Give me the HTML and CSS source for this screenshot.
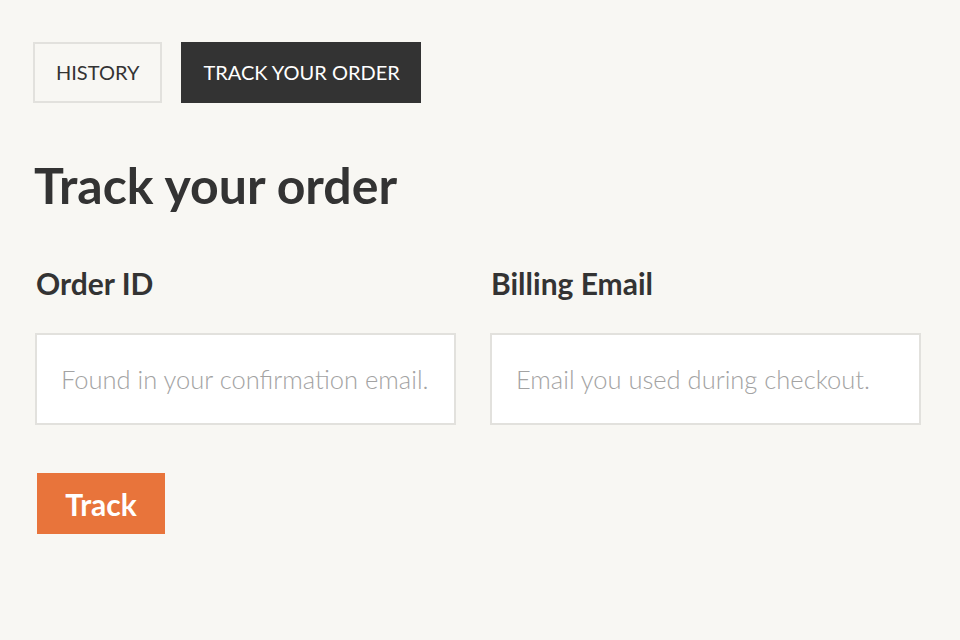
FILE: index.html
```html
<!DOCTYPE html>
<html lang="en">
<head>
    <meta charset="UTF-8">
    <meta name="viewport" content="width=device-width, initial-scale=1.0">
    <title>Track your order</title>
    <link rel="stylesheet" href="styles.css">
</head>
<body>
    <div class="page">
        <nav class="tabs">
            <a class="tab" href="#">HISTORY</a>
            <a class="tab active" href="#">TRACK YOUR ORDER</a>
        </nav>

        <h1>Track your order</h1>

        <form class="track-form">
            <div class="fields">
                <div class="field">
                    <label for="order-id">Order ID</label>
                    <input id="order-id" type="text" placeholder="Found in your confirmation email.">
                </div>
                <div class="field">
                    <label for="billing-email">Billing Email</label>
                    <input id="billing-email" type="email" placeholder="Email you used during checkout.">
                </div>
            </div>
            <button type="submit" class="btn-track">Track</button>
        </form>
    </div>
</body>
</html>
```

FILE: styles.css
```css
* {
    margin: 0;
    padding: 0;
    box-sizing: border-box;
}

body {
    font-family: 'Lato', 'Liberation Sans', sans-serif;
    background: #f8f7f3;
    color: #333333;
}

.page {
    padding: 42px 39px 0 33px;
}

.tabs {
    display: flex;
    gap: 19px;
}

.tab {
    display: block;
    height: 61px;
    line-height: 57px;
    padding: 0 21px;
    border: 2px solid #e2e1dd;
    font-size: 20px;
    color: #333333;
    text-decoration: none;
}

.tab.active {
    background: #333333;
    border-color: #333333;
    color: #ffffff;
    padding: 0 19px 0 20px;
}

h1 {
    margin: 52px 0 0 1px;
    font-size: 50px;
    font-weight: 700;
    line-height: 60px;
}

.track-form {
    margin: 0 0 0 2px;
}

.fields {
    display: grid;
    grid-template-columns: 421px 1fr;
    gap: 34px;
}

.field label {
    display: block;
    margin: 50px 0 0 1px;
    font-size: 30px;
    font-weight: 700;
    line-height: 36px;
}

.field input {
    display: block;
    width: 100%;
    height: 92px;
    margin-top: 32px;
    padding: 0 24px;
    border: 2px solid #e2e1dd;
    background: #ffffff;
    font-family: inherit;
    font-size: 25.5px;
    font-weight: 300;
    color: #333333;
    outline: none;
}

.field input::placeholder {
    color: #a3a3a3;
}

.btn-track {
    display: block;
    width: 128px;
    height: 61px;
    margin: 48px 0 0 2px;
    border: none;
    background: #e8743b;
    color: #ffffff;
    font-family: inherit;
    font-size: 30px;
    font-weight: 700;
    cursor: pointer;
}
```
